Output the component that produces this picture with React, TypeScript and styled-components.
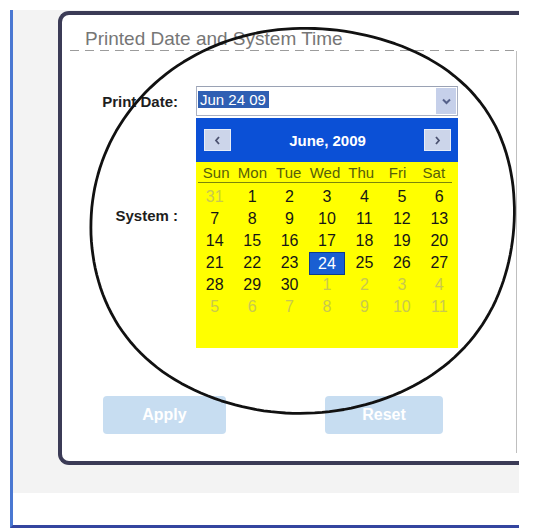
import React from 'react';
import styled, { createGlobalStyle } from 'styled-components';

const GlobalStyle = createGlobalStyle`
  html, body { margin: 0; padding: 0; background: #ffffff; }
  body { font-family: "Liberation Sans", Arial, sans-serif; }
  * { box-sizing: border-box; }
`;

const Page = styled.div`
  position: relative;
  width: 545px;
  height: 531px;
  padding: 10px 0 0 10px;
  overflow: hidden;
  background: #ffffff;
`;

const Frame = styled.div`
  width: 509px;
  height: 518px;
  border-left: 3px solid #4a78d2;
  border-bottom: 3px solid #34459f;
  display: flex;
  flex-direction: column;
`;

const Backdrop = styled.div`
  background: #f3f3f3;
  padding: 1px 0 28px 45px;
`;

const Footer = styled.div`
  height: 32px;
  background: #ffffff;
`;

const Panel = styled.div`
  height: 454px;
  background: #ffffff;
  border: 4px solid #3b3b56;
  border-right: none;
  border-radius: 11px 0 0 11px;
  display: flex;
  flex-direction: column;
  padding: 0 2px 8px 8px;
`;

const Legend = styled.div`
  height: 35px;
  padding: 13px 0 0 15px;
  font-size: 19px;
  line-height: 22px;
  color: #767676;
  white-space: nowrap;
`;

const DashRule = styled.div`
  height: 1px;
  background: repeating-linear-gradient(90deg, #9c9c9c 0 9px, transparent 9px 15px);
`;

const FieldBody = styled.div`
  flex: 1;
  border-right: 1px solid #bfbfbf;
  padding-top: 35px;
  display: flex;
  flex-direction: column;
`;

const FormRow = styled.div<{ $gap: number }>`
  display: grid;
  grid-template-columns: 108px 262px;
  column-gap: 18px;
  align-items: center;
  height: 30px;
  margin-top: ${(p) => p.$gap}px;
`;

const Label = styled.div`
  text-align: right;
  font-size: 15px;
  font-weight: bold;
  color: #1e1e1e;
  white-space: nowrap;
`;

const ControlCell = styled.div`
  position: relative;
  height: 30px;
`;

const InputBox = styled.div`
  height: 30px;
  border: 1px solid #a9b0c2;
  border-top-color: #9aa2b4;
  background: #ffffff;
  display: flex;
  align-items: center;
  padding: 0 0 0 1px;
`;

const SelectedText = styled.span`
  background: #2f5fb3;
  color: #ffffff;
  font-size: 15px;
  line-height: 17px;
  height: 17px;
  padding: 0 3px 0 2px;
  margin-top: -4px;
`;

const DropButton = styled.div`
  margin-left: auto;
  margin-right: 1px;
  width: 20px;
  height: 26px;
  background: #c6d0ea;
  display: flex;
  align-items: center;
  justify-content: center;
`;

const Calendar = styled.div`
  position: absolute;
  top: 32px;
  left: 0;
  width: 262px;
  z-index: 2;
`;

const CalHeader = styled.div`
  height: 44px;
  background: #0b50d6;
  display: flex;
  align-items: center;
  justify-content: space-between;
  padding: 0 7px 0 8px;
`;

const NavButton = styled.div`
  width: 27px;
  height: 22px;
  background: #ccd5ea;
  border: 1px solid #e8edf7;
  display: flex;
  align-items: center;
  justify-content: center;
`;

const CalTitle = styled.div`
  color: #ffffff;
  font-size: 15px;
  font-weight: bold;
`;

const CalBody = styled.div`
  height: 186px;
  background: #ffff00;
  padding-top: 2px;
`;

const WeekHead = styled.div`
  display: grid;
  grid-template-columns: repeat(7, 1fr);
  height: 19px;
  margin: 0 6px 0 2px;
  border-bottom: 1px solid #7a850c;
`;

const WeekDay = styled.div`
  text-align: center;
  font-size: 15px;
  line-height: 18px;
  color: #56600a;
`;

const DayGrid = styled.div`
  display: grid;
  grid-template-columns: repeat(7, 1fr);
  grid-auto-rows: 22px;
  margin-top: 3px;
`;

const Day = styled.div<{ $muted?: boolean; $selected?: boolean }>`
  display: flex;
  align-items: center;
  justify-content: center;
  font-size: 16px;
  color: ${(p) => (p.$selected ? '#ffffff' : p.$muted ? '#c9c94e' : '#161616')};
  background: ${(p) => (p.$selected ? '#1a5fd2' : 'transparent')};
  border: 1px solid ${(p) => (p.$selected ? '#0c3c8e' : 'transparent')};
  margin: ${(p) => (p.$selected ? '0 1px' : '0')};
  height: ${(p) => (p.$selected ? '23px' : '22px')};
`;

const ButtonRow = styled.div`
  display: flex;
  gap: 99px;
  padding-left: 33px;
  margin-top: 166px;
`;

const ActionButton = styled.button<{ $w: number }>`
  width: ${(p) => p.$w}px;
  height: 38px;
  border: none;
  border-radius: 4px;
  background: #c7ddf1;
  color: #ffffff;
  font-family: "Liberation Sans", Arial, sans-serif;
  font-size: 16px;
  font-weight: bold;
  padding: 0;
`;

const Overlay = styled.svg`
  position: absolute;
  top: 0;
  left: 0;
  width: 545px;
  height: 531px;
  pointer-events: none;
  z-index: 5;
`;

// Hand-drawn looking ellipse: a base ellipse with a gentle bulge toward the upper right.
function loopPath(): string {
  const cx = 300;
  const cy = 221;
  const ry = 192;
  const steps = 180;
  const bump = (t: number, center: number, amp: number, width: number) => {
    let d = t - center;
    while (d > Math.PI) d -= 2 * Math.PI;
    while (d < -Math.PI) d += 2 * Math.PI;
    return amp * Math.exp(-(d * d) / (2 * width * width));
  };
  const deg = Math.PI / 180;
  let d = '';
  for (let i = 0; i <= steps; i++) {
    const t = (i / steps) * 2 * Math.PI;
    const c = Math.cos(t);
    const s = Math.sin(t);
    const rx = c >= 0 ? 211 : 208;
    const k =
      1 +
      bump(t, -38 * deg, 0.055, 22 * deg) +
      bump(t, 40 * deg, 0.02, 20 * deg) +
      bump(t, 142 * deg, 0.03, 20 * deg);
    const x = cx + rx * c * k;
    const y = cy + ry * s * k;
    d += `${i === 0 ? 'M' : 'L'}${x.toFixed(1)},${y.toFixed(1)} `;
  }
  return d + 'Z';
}

const weekDays = ['Sun', 'Mon', 'Tue', 'Wed', 'Thu', 'Fri', 'Sat'];

type Cell = { n: number; muted?: boolean; selected?: boolean };

const days: Cell[] = [
  { n: 31, muted: true },
  ...Array.from({ length: 30 }, (_, i) => ({ n: i + 1, selected: i + 1 === 24 })),
  ...Array.from({ length: 11 }, (_, i) => ({ n: i + 1, muted: true })),
];

const Chevron = ({ dir }: { dir: 'left' | 'right' | 'down' }) => {
  if (dir === 'down') {
    return (
      <svg width="9" height="7" viewBox="0 0 9 7">
        <polyline points="1,1.5 4.5,5 8,1.5" fill="none" stroke="#55608a" strokeWidth="2" />
      </svg>
    );
  }
  const pts = dir === 'left' ? '5,1 2,4.5 5,8' : '2,1 5,4.5 2,8';
  return (
    <svg width="7" height="9" viewBox="0 0 7 9">
      <polyline points={pts} fill="none" stroke="#4c5270" strokeWidth="1.8" />
    </svg>
  );
};

export default function App() {
  return (
    <>
      <GlobalStyle />
      <Page>
        <Frame>
          <Backdrop>
            <Panel>
              <Legend>Printed Date and System Time</Legend>
              <DashRule />
              <FieldBody>
                <FormRow $gap={0}>
                  <Label>Print Date:</Label>
                  <ControlCell>
                    <InputBox>
                      <SelectedText>Jun 24 09</SelectedText>
                      <DropButton>
                        <Chevron dir="down" />
                      </DropButton>
                    </InputBox>
                    <Calendar>
                      <CalHeader>
                        <NavButton>
                          <Chevron dir="left" />
                        </NavButton>
                        <CalTitle>June, 2009</CalTitle>
                        <NavButton>
                          <Chevron dir="right" />
                        </NavButton>
                      </CalHeader>
                      <CalBody>
                        <WeekHead>
                          {weekDays.map((d) => (
                            <WeekDay key={d}>{d}</WeekDay>
                          ))}
                        </WeekHead>
                        <DayGrid>
                          {days.map((c, i) => (
                            <Day key={i} $muted={c.muted} $selected={c.selected}>
                              {c.n}
                            </Day>
                          ))}
                        </DayGrid>
                      </CalBody>
                    </Calendar>
                  </ControlCell>
                </FormRow>
                <FormRow $gap={84}>
                  <Label>System :</Label>
                  <ControlCell />
                </FormRow>
                <ButtonRow>
                  <ActionButton $w={123}>Apply</ActionButton>
                  <ActionButton $w={118}>Reset</ActionButton>
                </ButtonRow>
              </FieldBody>
            </Panel>
          </Backdrop>
          <Footer />
        </Frame>
        <Overlay viewBox="0 0 545 531">
          <path d={loopPath()} fill="none" stroke="#111111" strokeWidth="2.8" strokeLinejoin="round" />
        </Overlay>
      </Page>
    </>
  );
}
